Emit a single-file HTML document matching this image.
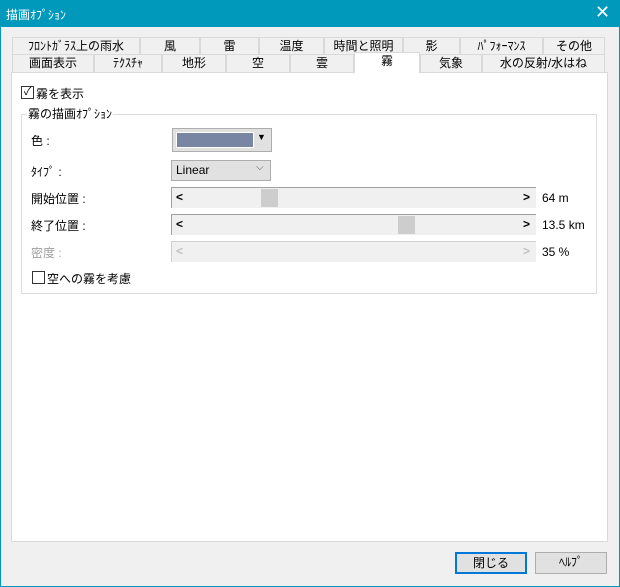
<html><head><style>
*{box-sizing:border-box}
body{margin:0;width:620px;height:587px;background:#f0f0f0;font-family:"Liberation Sans","Noto Sans CJK JP",sans-serif;font-size:12px;color:#000;position:relative;overflow:hidden}
.a{position:absolute}
.tb{left:0;top:0;width:620px;height:27px;background:#0099bc;color:#fff}
.tab{position:absolute;height:18px;border:1px solid #d9d9d9;border-bottom:none;background:#f0f0f0;text-align:center;line-height:17px}
.sl{position:absolute;left:171px;width:365px;height:21px;background:#f0f0f0;border-left:1px solid #a0a0a0;border-top:1px solid #a0a0a0}
.sl .l{position:absolute;left:4px;top:2px;font-weight:bold}
.sl .r{position:absolute;right:6px;top:2px;font-weight:bold}
.th{position:absolute;top:1px;width:17px;height:18px;background:#cdcdcd}
.btn{position:absolute;top:552px;width:72px;height:22px;border:1px solid #adadad;background:#e1e1e1;text-align:center;line-height:19px}
</style></head><body>
<div class="a" style="left:0;top:0;width:620px;height:587px;border:1px solid #0099bc;border-top:none"></div>
<div class="a tb"><span class="a" style="left:6px;top:6px">描画ｵﾌﾟｼｮﾝ</span><span class="a" style="left:595px;top:2px;font-size:18px">✕</span></div>
<div class="a" style="left:11px;top:72px;width:597px;height:470px;background:#fff;border:1px solid #d9d9d9"></div>
<div class="tab" style="left:12px;top:37px;width:128px">ﾌﾛﾝﾄｶﾞﾗｽ上の雨水</div>
<div class="tab" style="left:140px;top:37px;width:60px">風</div>
<div class="tab" style="left:200px;top:37px;width:59px">雷</div>
<div class="tab" style="left:259px;top:37px;width:65px">温度</div>
<div class="tab" style="left:324px;top:37px;width:79px">時間と照明</div>
<div class="tab" style="left:403px;top:37px;width:57px">影</div>
<div class="tab" style="left:460px;top:37px;width:83px">ﾊﾟﾌｫｰﾏﾝｽ</div>
<div class="tab" style="left:543px;top:37px;width:62px">その他</div>
<div class="tab" style="left:12px;top:54px;width:82px">画面表示</div>
<div class="tab" style="left:94px;top:54px;width:68px">ﾃｸｽﾁｬ</div>
<div class="tab" style="left:162px;top:54px;width:64px">地形</div>
<div class="tab" style="left:226px;top:54px;width:64px">空</div>
<div class="tab" style="left:290px;top:54px;width:64px">雲</div>
<div class="tab" style="left:354px;top:52px;width:66px;height:21px;background:#fff;border-color:#d9d9d9">霧</div>
<div class="tab" style="left:420px;top:54px;width:62px">気象</div>
<div class="tab" style="left:482px;top:54px;width:123px">水の反射/水はね</div>
<div class="a" style="left:21px;top:86px;width:13px;height:13px;border:1px solid #333;font-size:11px;line-height:11px;text-align:center">✓</div>
<span class="a" style="left:36px;top:85px">霧を表示</span>
<div class="a" style="left:21px;top:114px;width:576px;height:180px;border:1px solid #dcdcdc"></div>
<span class="a" style="left:27px;top:105px;background:#fff;padding:0 1px">霧の描画ｵﾌﾟｼｮﾝ</span>
<span class="a" style="left:31px;top:132px">色 :</span>
<div class="a" style="left:172px;top:128px;width:100px;height:24px;border:1px solid #adadad;background:#e1e1e1"><div class="a" style="left:3px;top:3px;width:78px;height:16px;background:#7886a4;border:1px solid #fff"></div><span class="a" style="left:84px;top:3px;font-size:9px">▼</span></div>
<span class="a" style="left:31px;top:163px">ﾀｲﾌﾟ :</span>
<div class="a" style="left:171px;top:160px;width:100px;height:21px;border:1px solid #adadad;background:#e1e1e1"><span class="a" style="left:4px;top:2px">Linear</span><span class="a" style="left:84px;top:1px;font-size:10px;color:#555">⌵</span></div>
<span class="a" style="left:31px;top:190px">開始位置 :</span>
<div class="sl" style="top:187px"><span class="l">&lt;</span><div class="th" style="left:89px"></div><span class="r">&gt;</span></div>
<span class="a" style="left:542px;top:191px">64 m</span>
<span class="a" style="left:31px;top:217px">終了位置 :</span>
<div class="sl" style="top:214px"><span class="l">&lt;</span><div class="th" style="left:226px"></div><span class="r">&gt;</span></div>
<span class="a" style="left:542px;top:218px">13.5 km</span>
<span class="a" style="left:31px;top:244px;color:#a0a0a0">密度 :</span>
<div class="sl" style="top:241px;border-color:#d0d0d0;color:#c0c0c0"><span class="l">&lt;</span><span class="r">&gt;</span></div>
<span class="a" style="left:542px;top:245px">35 %</span>
<div class="a" style="left:32px;top:271px;width:13px;height:13px;border:1px solid #333"></div>
<span class="a" style="left:47px;top:270px">空への霧を考慮</span>
<div class="btn" style="left:455px;border:2px solid #0078d7;line-height:18px">閉じる</div>
<div class="btn" style="left:535px">ﾍﾙﾌﾟ</div>
</body></html>
